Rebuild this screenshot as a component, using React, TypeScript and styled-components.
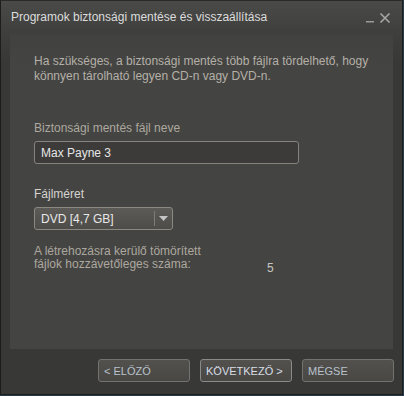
import React from 'react'
import styled, { createGlobalStyle } from 'styled-components'

const GlobalStyle = createGlobalStyle`
  html, body {
    margin: 0;
    padding: 0;
    background: #2b3a4a;
  }
  body {
    font-family: Arial, "Liberation Sans", sans-serif;
  }
`

const Window = styled.div`
  width: 403px;
  height: 395px;
  box-sizing: border-box;
  border: 1px solid #1d1d1c;
  border-top-color: #2a2a29;
  background: linear-gradient(#4a4a48 0px, #3e3e3c 34px, #383836 60px, #383836 100%);
  display: flex;
  flex-direction: column;
`

const TitleBar = styled.div`
  height: 33px;
  display: flex;
  align-items: center;
  padding: 0 0 0 10px;
  box-sizing: border-box;
`

const Title = styled.div`
  flex: 1;
  font-size: 12px;
  color: #dcdcdc;
  margin-top: -2px;
`

const WinButton = styled.button<{ gap: number }>`
  width: 14px;
  height: 14px;
  padding: 0;
  margin-right: ${(p) => p.gap}px;
  border: none;
  background: none;
  display: flex;
  align-items: center;
  justify-content: center;
`

const Panel = styled.div`
  margin: 0 9px 0 9px;
  height: 315px;
  background: linear-gradient(#41413f 0px, #444442 30px, #444442 100%);
  padding: 20px 0 0 24px;
  box-sizing: border-box;
  display: flex;
  flex-direction: column;
`

const Intro = styled.p`
  margin: 0;
  font-size: 12px;
  line-height: 15px;
  color: #b4b0a8;
  width: 345px;
`

const FieldLabel = styled.div<{ bright?: boolean; top: number }>`
  margin-top: ${(p) => p.top}px;
  font-size: 12px;
  line-height: 15px;
  color: ${(p) => (p.bright ? '#d6d4d0' : '#aca89f')};
`

const TextInput = styled.input`
  margin-top: 5px;
  width: 265px;
  height: 23px;
  box-sizing: border-box;
  border: 1px solid #86837d;
  border-radius: 3px;
  background: #3c3b39;
  color: #e6e6e6;
  font-family: Arial, "Liberation Sans", sans-serif;
  font-size: 12px;
  padding: 0 6px;
  outline: none;
`

const Select = styled.div`
  margin-top: 5px;
  width: 139px;
  height: 23px;
  box-sizing: border-box;
  border: 1px solid #8b8882;
  border-radius: 3px;
  background: linear-gradient(#5c5b57, #4d4c49);
  display: flex;
  align-items: center;
  color: #e8e8e8;
  font-size: 12px;
`

const SelectValue = styled.div`
  flex: 1;
  padding-left: 6px;
`

const SelectDivider = styled.div`
  width: 1px;
  height: 15px;
  background: #7e7c76;
`

const SelectArrow = styled.div`
  width: 17px;
  display: flex;
  justify-content: center;
  align-items: center;
`

const EstimateRow = styled.div`
  margin-top: 15px;
  display: flex;
  align-items: flex-end;
`

const EstimateLabel = styled.div`
  width: 233px;
  font-size: 12px;
  line-height: 13px;
  color: #aca89f;
`

const EstimateValue = styled.div`
  font-size: 12px;
  color: #c8c6c2;
  margin-bottom: -4px;
`

const Footer = styled.div`
  flex: 1;
  display: flex;
  justify-content: flex-end;
  align-items: center;
  gap: 10px;
  padding: 0 8px 2px 0;
`

const Button = styled.button<{ strong?: boolean }>`
  width: 92px;
  height: 23px;
  box-sizing: border-box;
  border: 1px solid ${(p) => (p.strong ? '#8a8a88' : '#73726e')};
  border-radius: 3px;
  background: linear-gradient(#52514e, #484744);
  color: ${(p) => (p.strong ? '#d8dde6' : '#b9c2cc')};
  font-family: Arial, "Liberation Sans", sans-serif;
  font-size: 11px;
  text-align: left;
  padding: 0 0 0 5px;
`

export default function App() {
  return (
    <>
      <GlobalStyle />
      <Window>
        <TitleBar>
          <Title>Programok biztonsági mentése és visszaállítása</Title>
          <WinButton gap={1} aria-label="minimize">
            <svg width="10" height="14" viewBox="0 0 10 14">
              <rect x="1" y="10" width="8" height="1.5" fill="#9a9a98" />
            </svg>
          </WinButton>
          <WinButton gap={10} aria-label="close">
            <svg width="12" height="12" viewBox="0 0 12 12">
              <path d="M1.5 1.5 L10.5 10.5 M10.5 1.5 L1.5 10.5" stroke="#a6a6a4" strokeWidth="1.6" />
            </svg>
          </WinButton>
        </TitleBar>
        <Panel>
          <Intro>
            Ha szükséges, a biztonsági mentés több fájlra tördelhető, hogy könnyen tárolható legyen CD-n vagy DVD-n.
          </Intro>
          <FieldLabel top={37}>Biztonsági mentés fájl neve</FieldLabel>
          <TextInput defaultValue="Max Payne 3" />
          <FieldLabel top={23} bright>
            Fájlméret
          </FieldLabel>
          <Select>
            <SelectValue>DVD [4,7 GB]</SelectValue>
            <SelectDivider />
            <SelectArrow>
              <svg width="9" height="5" viewBox="0 0 9 5">
                <path d="M0 0 H9 L4.5 5 Z" fill="#c4c4c4" />
              </svg>
            </SelectArrow>
          </Select>
          <EstimateRow>
            <EstimateLabel>
              A létrehozásra kerülő tömörített
              <br />
              fájlok hozzávetőleges száma:
            </EstimateLabel>
            <EstimateValue>5</EstimateValue>
          </EstimateRow>
        </Panel>
        <Footer>
          <Button>&lt; ELŐZŐ</Button>
          <Button strong>KÖVETKEZŐ &gt;</Button>
          <Button>MÉGSE</Button>
        </Footer>
      </Window>
    </>
  )
}
